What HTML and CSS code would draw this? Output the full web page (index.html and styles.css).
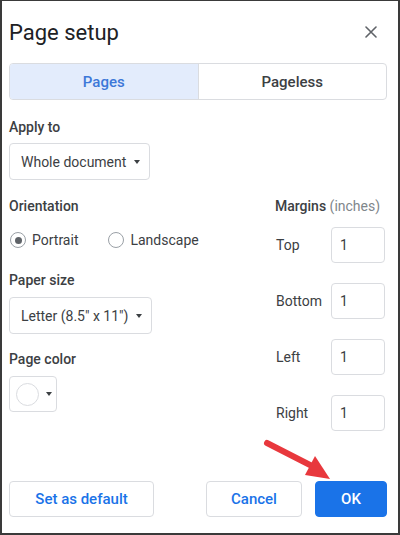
FILE: index.html
```html
<!DOCTYPE html>
<html>
<head>
<meta charset="utf-8">
<link rel="stylesheet" href="styles.css">
</head>
<body>
<div class="dialog">
  <div class="head">
    <h1 class="title">Page setup</h1>
    <span class="close">
      <svg width="12" height="12" viewBox="0 0 12 12"><path d="M1 1L11 11M11 1L1 11" stroke="#5f6368" stroke-width="1.6" stroke-linecap="round"/></svg>
    </span>
  </div>
  <div class="seg">
    <div class="seg-item active">Pages</div>
    <div class="seg-item">Pageless</div>
  </div>
  <div class="label label-apply">Apply to</div>
  <div class="select select-apply">Whole document<span class="caret"></span></div>
  <div class="cols">
    <div class="col-left">
      <div class="label">Orientation</div>
      <div class="radios">
        <span class="radio-opt"><span class="radio on"></span>Portrait</span>
        <span class="radio-opt"><span class="radio"></span>Landscape</span>
      </div>
      <div class="label label-paper">Paper size</div>
      <div class="select select-paper">Letter (8.5" x 11")<span class="caret"></span></div>
      <div class="label label-color">Page color</div>
      <div class="color-btn"><span class="swatch"></span><span class="caret"></span></div>
    </div>
    <div class="col-right">
      <div class="label nowrap">Margins <span class="unit">(inches)</span></div>
      <div class="margins">
        <span class="m-label">Top</span><span class="m-input">1</span>
        <span class="m-label">Bottom</span><span class="m-input">1</span>
        <span class="m-label">Left</span><span class="m-input">1</span>
        <span class="m-label">Right</span><span class="m-input">1</span>
      </div>
    </div>
  </div>
  <div class="footer">
    <span class="btn">Set as default</span>
    <span class="spacer"></span>
    <span class="btn btn-cancel">Cancel</span>
    <span class="btn btn-ok">OK</span>
  </div>
  <svg class="arrow" width="80" height="50" viewBox="0 0 80 50">
    <line x1="7" y1="8" x2="52" y2="31" stroke="#e8383d" stroke-width="6" stroke-linecap="round"/>
    <polygon points="55,21 45,40 70,44" fill="#e8383d"/>
  </svg>
</div>
</body>
</html>
```

FILE: styles.css
```css
* { box-sizing: border-box; }
html, body { margin: 0; padding: 0; background: #fff; }
body { font-family: Roboto, "Noto Sans", Arial, sans-serif; color: #3c4043; }

.dialog {
  position: relative;
  width: 400px;
  height: 535px;
  border: 2px solid #3a3a3a;
  border-top-width: 1px;
  padding: 19px 11px 16px 7px;
  display: flex;
  flex-direction: column;
}

.head {
  display: flex;
  justify-content: space-between;
  align-items: center;
  height: 26px;
}
.title {
  margin: 0;
  font-size: 22px;
  line-height: 26px;
  font-weight: 400;
  color: #202124;
}
.close { display: flex; margin-right: 10px; margin-top: -2px; }

.seg {
  margin-top: 17px;
  display: flex;
  height: 37px;
  border: 1px solid #dadce0;
  border-radius: 4px;
  overflow: hidden;
}
.seg-item {
  flex: 1;
  display: flex;
  align-items: center;
  justify-content: center;
  font-size: 15px;
  font-weight: 500;
  color: #3c4043;
}
.seg-item.active {
  background: #e3ecfc;
  color: #3c78d8;
  border-right: 1px solid #dadce0;
}

.label {
  font-size: 14px;
  line-height: 18px;
  font-weight: 500;
  color: #3c4043;
}
.nowrap { white-space: nowrap; }
.unit { font-weight: 400; color: #80868b; }
.label-apply { margin-top: 18px; }

.select {
  display: inline-flex;
  align-self: flex-start;
  align-items: center;
  gap: 8px;
  height: 37px;
  padding: 0 9px 0 11px;
  border: 1px solid #dadce0;
  border-radius: 4px;
  font-size: 14px;
  color: #3c4043;
}
.select-apply { margin-top: 7px; }
.caret {
  width: 0; height: 0;
  border-left: 3.5px solid transparent;
  border-right: 3.5px solid transparent;
  border-top: 4px solid #3c4043;
}

.cols {
  margin-top: 17px;
  display: flex;
  justify-content: space-between;
}
.col-left { display: flex; flex-direction: column; }

.radios {
  margin-top: 16px;
  display: flex;
  gap: 30px;
  font-size: 14px;
  line-height: 18px;
  color: #3c4043;
}
.radio-opt { display: inline-flex; align-items: center; gap: 6px; }
.radio-opt:first-child { margin-left: 1px; }
.radio {
  width: 16px; height: 16px;
  border: 1.5px solid #9aa0a6;
  border-radius: 50%;
  display: inline-flex;
  align-items: center;
  justify-content: center;
}
.radio.on::after {
  content: "";
  width: 7px; height: 7px;
  border-radius: 50%;
  background: #5f6368;
}

.label-paper { margin-top: 22px; }
.select-paper { margin-top: 8px; }
.label-color { margin-top: 16px; }

.color-btn {
  margin-top: 8px;
  width: 48px;
  height: 36px;
  border: 1px solid #dadce0;
  border-radius: 4px;
  display: flex;
  align-items: center;
  padding-left: 6px;
  gap: 7px;
}
.swatch {
  width: 23px; height: 23px;
  border: 1px solid #dadce0;
  border-radius: 50%;
}

.col-right { width: 110px; margin-right: 2px; }
.margins {
  margin-top: 12px;
  display: grid;
  grid-template-columns: 56px 54px;
  row-gap: 20px;
  align-items: center;
}
.m-label { font-size: 14px; color: #3c4043; padding-left: 1px; }
.m-input {
  height: 36px;
  border: 1px solid #dadce0;
  border-radius: 4px;
  display: flex;
  align-items: center;
  padding-left: 8px;
  font-size: 14px;
  color: #3c4043;
}

.footer {
  margin-top: auto;
  display: flex;
  align-items: center;
  gap: 13px;
}
.spacer { flex: 1; }
.btn {
  height: 36px;
  display: inline-flex;
  align-items: center;
  justify-content: center;
  border: 1px solid #dadce0;
  border-radius: 4px;
  font-size: 15px;
  font-weight: 500;
  color: #1a73e8;
  padding: 0 24px;
}
.btn:first-child { width: 145px; }
.btn-cancel { width: 96px; }
.btn-ok {
  width: 72px;
  background: #1a73e8;
  border-color: #1a73e8;
  color: #fff;
}

.arrow {
  position: absolute;
  left: 258px;
  top: 434px;
  pointer-events: none;
}
```
